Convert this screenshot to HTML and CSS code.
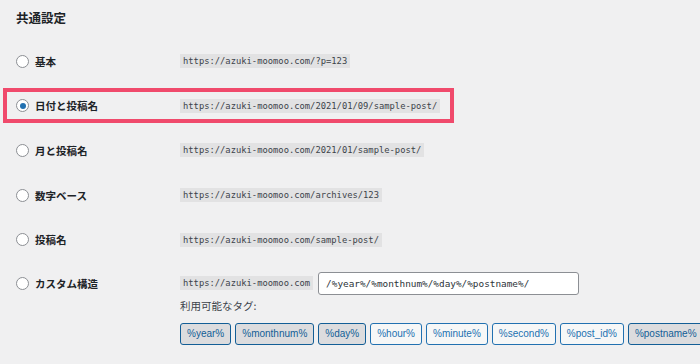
FILE: index.html
```html
<!DOCTYPE html>
<html lang="ja">
<head>
    <meta charset="UTF-8">
    <meta name="viewport" content="width=device-width, initial-scale=1.0">
    <title>パーマリンク設定</title>
    <link rel="stylesheet" href="styles.css">
</head>
<body>
    <!-- Common settings -->
    <h2 class="section-title">共通設定</h2>

    <div class="options">
        <div class="row">
            <label class="option"><span class="radio"></span>基本</label>
            <div class="value"><code>https://azuki-moomoo.com/?p=123</code></div>
        </div>

        <div class="row highlight">
            <label class="option"><span class="radio checked"></span>日付と投稿名</label>
            <div class="value"><code>https://azuki-moomoo.com/2021/01/09/sample-post/</code></div>
        </div>

        <div class="row">
            <label class="option"><span class="radio"></span>月と投稿名</label>
            <div class="value"><code>https://azuki-moomoo.com/2021/01/sample-post/</code></div>
        </div>

        <div class="row">
            <label class="option"><span class="radio"></span>数字ベース</label>
            <div class="value"><code>https://azuki-moomoo.com/archives/123</code></div>
        </div>

        <div class="row">
            <label class="option"><span class="radio"></span>投稿名</label>
            <div class="value"><code>https://azuki-moomoo.com/sample-post/</code></div>
        </div>

        <!-- Custom structure -->
        <div class="row custom">
            <label class="option"><span class="radio"></span>カスタム構造</label>
            <div>
                <div class="custom-line">
                    <code>https://azuki-moomoo.com</code>
                    <input class="custom-input" type="text" value="/%year%/%monthnum%/%day%/%postname%/">
                </div>
                <p class="tags-label">利用可能なタグ:</p>
                <div class="tags">
                    <button class="tag active">%year%</button>
                    <button class="tag active">%monthnum%</button>
                    <button class="tag active">%day%</button>
                    <button class="tag">%hour%</button>
                    <button class="tag">%minute%</button>
                    <button class="tag">%second%</button>
                    <button class="tag">%post_id%</button>
                    <button class="tag active">%postname%</button>
                </div>
            </div>
        </div>
    </div>
</body>
</html>
```

FILE: styles.css
```css
body {
    margin: 0;
    padding: 0 16px;
    background-color: #f0f0f1;
    color: #1d2327;
    font-family: "Noto Sans CJK JP", "Noto Sans", sans-serif;
}

.section-title {
    margin: 10px 0 13px;
    font-size: 12.5px;
    line-height: 16px;
    font-weight: bold;
}

/* Option rows */
.row {
    display: grid;
    grid-template-columns: 164px 1fr;
    align-items: center;
    height: 44.6px;
}

.option {
    display: flex;
    align-items: center;
    gap: 6px;
    font-size: 10.5px;
    font-weight: bold;
}

.value {
    display: flex;
    align-items: center;
}

.radio {
    width: 11px;
    height: 11px;
    border: 1px solid #8c8f94;
    border-radius: 50%;
    background-color: #fff;
    display: flex;
    align-items: center;
    justify-content: center;
}

.radio.checked::after {
    content: "";
    width: 6px;
    height: 6px;
    border-radius: 50%;
    background-color: #2271b1;
}

code {
    display: inline-block;
    background-color: #e2e2e3;
    color: #3c434a;
    font-family: "DejaVu Sans Mono", monospace;
    font-size: 8.8px;
    line-height: 14px;
    padding: 0 3px;
}

/* Pink highlight around the selected option */
.highlight {
    position: relative;
}

.highlight::before {
    content: "";
    position: absolute;
    left: -13px;
    top: 4px;
    width: 443px;
    height: 27px;
    border: 4px solid #f04a6c;
}

/* Custom structure */
.row.custom {
    align-items: start;
    height: auto;
    padding-top: 10px;
}

.row.custom .option {
    height: 23px;
}

.custom-line {
    display: flex;
    align-items: center;
    gap: 5px;
}

.custom-input {
    width: 261px;
    height: 23px;
    box-sizing: border-box;
    border: 1px solid #8c8f94;
    border-radius: 3px;
    background-color: #fff;
    color: #2c3338;
    font-family: "DejaVu Sans Mono", monospace;
    font-size: 9.4px;
    padding: 0 7px;
}

.tags-label {
    margin: 2px 0 0;
    font-size: 10.5px;
    line-height: 18px;
    color: #3c434a;
}

.tags {
    display: flex;
    gap: 4px;
    margin-top: 8px;
}

.tag {
    height: 22px;
    padding: 0 6px;
    border: 1px solid #2271b1;
    border-radius: 3px;
    background-color: #f6f7f7;
    color: #2271b1;
    font-family: "Liberation Sans", Arial, sans-serif;
    font-size: 10px;
    white-space: nowrap;
}

.tag.active {
    background-color: #dcdcde;
    border-color: #135e96;
    color: #135e96;
}
```
